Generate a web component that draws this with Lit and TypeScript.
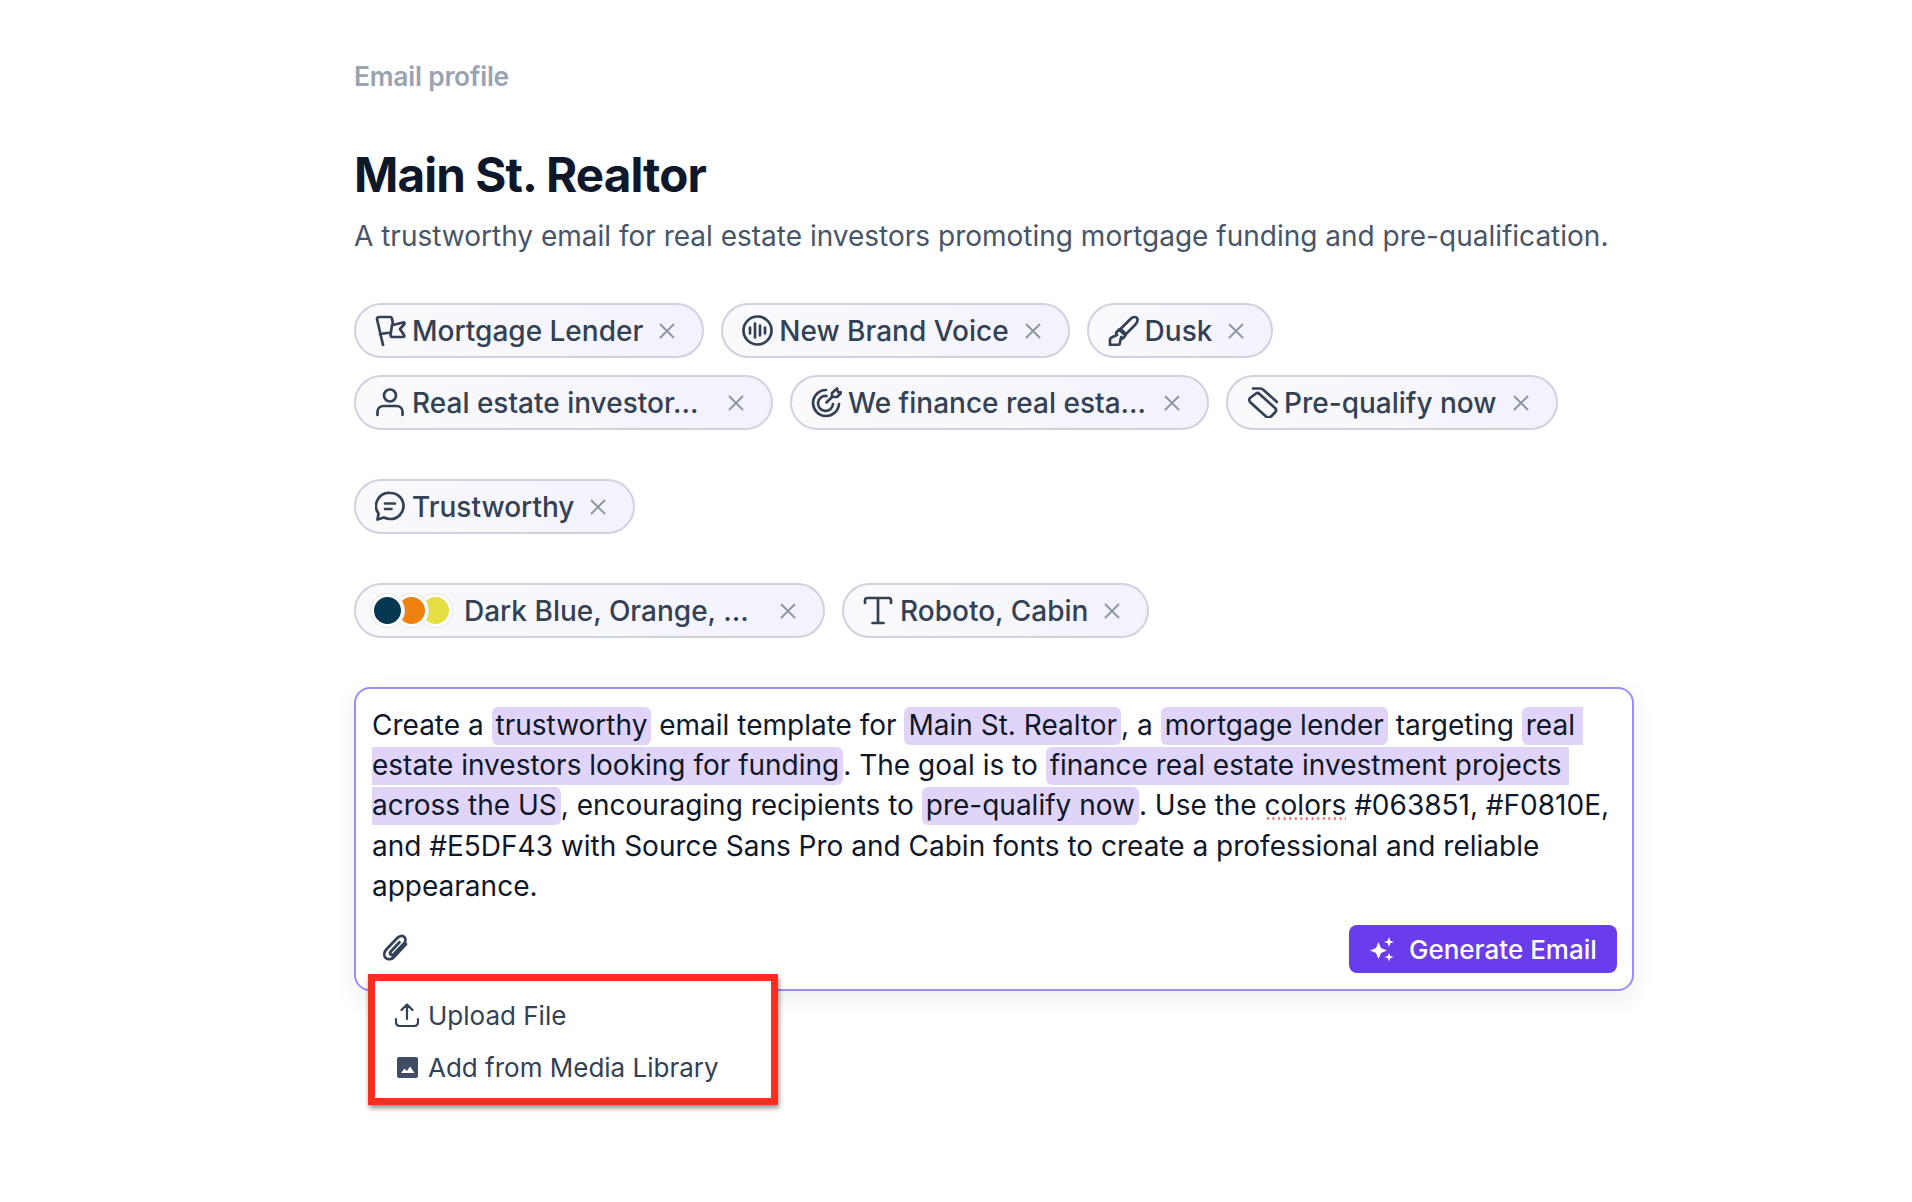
import { LitElement, css, html, svg } from 'lit';
import { customElement } from 'lit/decorators.js';

const ICONS: Record<string, unknown> = {
  flag: svg`<path d="M2 4 L8 30 M2 4 C2 2.5 3 2 4.5 2 H15 C16.5 2 17 3 17.2 4.5 L18 10 L28 7.5 C29.5 7.2 30 8 29 9.5 L25 14 L29 20 C29.8 21.5 29 22 28 22 H18 C16.5 22 15.5 21.5 15.5 20 L17 10 M5 19 L15.7 17.5"/>`,
  voice: svg`<circle cx="15.5" cy="15.5" r="14"/><path d="M8 12.5 v6 M13 8.5 v14 M18 10.5 v10 M23 12.5 v6"/>`,
  brush: svg`<path d="M23 3.5 C25 1.5 28.5 1.5 29.3 3.5 C30.2 5.8 29 8 27 10 L18 19 L12.5 14 Z"/><path d="M11 14.5 L17.5 20.5 L15 23.5 L13.2 22 L11.5 29.5 L2 30 L2 24.5 C2 23.5 3 22.8 4 22.3 L9 20 L8 17.8 Z"/>`,
  target: svg`<path d="M15 3 A13 13 0 1 0 28 17 M15.5 9 A7.5 7.5 0 1 0 22 17 M15.5 15.5 L21 10 M21 10 V6 L26 1.5 L27 5 L30.5 5.5 L26 10 Z"/>`,
  tag: svg`<path d="M3 11 L9 6.5 C10 5.8 11.5 6 12.5 7 L28 21 C29.5 22.5 29.5 24 28 25.5 L24 29.5 C22.5 31 20.5 31 19 29.5 L3.5 15.5 C2 14 2 12 3 11 Z M6 1.5 H13 C14.5 1.5 15.5 2 16.5 3 L30 15"/>`,
  person: svg`<circle cx="15" cy="8.5" r="6"/><path d="M2.5 28 V25 C2.5 21.5 5 19 8.5 19 H21.5 C25 19 27.5 21.5 27.5 25 V28"/>`,
  chat: svg`<path d="M15.5 2 A13 13 0 1 1 15.5 28 C13 28 11 27.5 9 26.5 L2.5 28.5 L3.5 22.5 A13 13 0 0 1 15.5 2 Z M10 12.5 H20 M10 18 H16.5"/>`,
  serif: svg`<path d="M2 8 V5.5 C2 4 3 3 4.5 3 H25.5 C27 3 28 4 28 5.5 V8 M15 3 V28 M9.5 28 H20.5"/>`,
};

const chip = (icon: string, label: string, long = false) => html`
  <span class="chip">
    <svg class="icon" viewBox="0 0 31 31">${ICONS[icon]}</svg>
    <span class="label ${long ? 'long' : ''}">${label}</span>
    <svg class="x" viewBox="0 0 16 16"><path d="M1 1 L15 15 M15 1 L1 15"/></svg>
  </span>
`;

@customElement('app-root')
export class AppRoot extends LitElement {
  static styles = css`
    :host {
      display: block;
      height: 1202px;
      background: #fff;
      color: #0f172a;
      font-family: Inter, 'Liberation Sans', sans-serif;
    }

    main {
      width: 1280px;
      padding: 57px 0 0 354px;
    }

    .eyebrow {
      font-size: 26.4px;
      line-height: 38px;
      font-weight: 600;
      color: #9aa3b2;
      letter-spacing: -0.2px;
    }

    h1 {
      margin: 51px 0 0;
      font-size: 47.6px;
      line-height: 58px;
      font-weight: 700;
      letter-spacing: -0.9px;
      color: #0f172a;
    }

    .sub {
      margin: 12px 0 0;
      font-size: 28px;
      line-height: 40px;
      color: #475569;
    }

    .rows {
      margin-top: 47px;
      display: flex;
      flex-direction: column;
      gap: 17px;
    }

    .group {
      margin-top: 49px;
    }

    .row {
      display: flex;
      gap: 17px;
    }

    .chip {
      box-sizing: border-box;
      height: 55px;
      display: inline-flex;
      align-items: center;
      padding: 0 27px 0 19px;
      border: 2px solid #cfd3df;
      border-radius: 28px;
      background: linear-gradient(100deg, #fafafc, #f3f2fd);
      font-size: 28px;
      font-weight: 500;
      color: #334155;
    }

    .chip.swatches {
      padding-left: 15px;
    }

    .icon {
      width: 31px;
      height: 31px;
      margin-right: 6px;
      flex: none;
      fill: none;
      stroke: #334155;
      stroke-width: 2.7;
      stroke-linecap: round;
      stroke-linejoin: round;
    }

    .label {
      white-space: nowrap;
    }

    .long {
      width: 300px;
    }

    .x {
      width: 16px;
      height: 16px;
      margin-left: 16px;
      flex: none;
      fill: none;
      stroke: #8f96a3;
      stroke-width: 2;
    }

    .dots {
      display: flex;
      margin-right: 12px;
    }

    .dot {
      position: relative;
      box-sizing: border-box;
      width: 33px;
      height: 33px;
      margin-right: -9px;
      border-radius: 50%;
      border: 3px solid #fff;
      box-shadow: 0 0 0 1px #e5e7eb;
    }

    .dot:nth-child(1) {
      z-index: 3;
      background: #063851;
    }

    .dot:nth-child(2) {
      z-index: 2;
      background: #f0810e;
    }

    .dot:nth-child(3) {
      z-index: 1;
      background: #e5df43;
      margin-right: 0;
    }

    .card {
      position: relative;
      box-sizing: border-box;
      margin-top: 49px;
      height: 304px;
      padding: 16px 15px 15px 16px;
      border: 2px solid #a18bf6;
      border-radius: 16px;
      box-shadow: 0 8px 24px rgba(15, 23, 42, 0.08);
      background: #fff;
    }

    .prompt {
      margin: 0;
      font-size: 28px;
      line-height: 40.2px;
      color: #0f172a;
      white-space: pre-wrap;
    }

    mark {
      background: #e0d4f8;
      color: inherit;
      padding: 1px 4px 3px;
      border-radius: 6px;
    }

    .typo {
      background-image: radial-gradient(circle, #f87171 1.2px, transparent 1.4px);
      background-size: 5.6px 3px;
      background-repeat: repeat-x;
      background-position: 0 calc(100% - 2px);
    }

    .bar {
      position: absolute;
      left: 15px;
      right: 15px;
      bottom: 16px;
      display: flex;
      align-items: center;
      justify-content: space-between;
    }

    .clip {
      width: 28px;
      height: 28px;
      margin: 0 0 2px 11px;
      fill: none;
      stroke: #334155;
      stroke-width: 2.8;
      stroke-linecap: round;
      stroke-linejoin: round;
    }

    button {
      height: 48px;
      width: 268px;
      display: flex;
      align-items: center;
      gap: 14px;
      padding: 0 0 0 20px;
      border: 0;
      border-radius: 8px;
      background: #6a3dec;
      color: #fff;
      font: 500 26px Inter, 'Liberation Sans', sans-serif;
    }

    button svg {
      width: 26px;
      height: 26px;
      fill: #fff;
    }

    .menu {
      position: absolute;
      left: 12px;
      top: 285px;
      box-sizing: border-box;
      width: 410px;
      height: 131px;
      padding: 14px 0 0 19px;
      border: 7px solid #ff2d20;
      background: #fff;
      box-shadow: 1px 3px 5px rgba(0, 0, 0, 0.45);
      display: flex;
      flex-direction: column;
      gap: 12px;
    }

    .item {
      display: flex;
      align-items: center;
      gap: 8px;
      height: 40px;
      font-size: 26px;
      color: #334155;
    }

    .item svg {
      width: 26px;
      height: 26px;
      flex: none;
    }
  `;

  render() {
    return html`
      <main>
        <div class="eyebrow">Email profile</div>
        <h1>Main St. Realtor</h1>
        <p class="sub">A trustworthy email for real estate investors promoting mortgage funding and pre-qualification.</p>

        <div class="rows">
          <div class="row">
            ${chip('flag', 'Mortgage Lender')}
            ${chip('voice', 'New Brand Voice')}
            ${chip('brush', 'Dusk')}
          </div>
          <div class="row">
            ${chip('person', 'Real estate investor...', true)}
            ${chip('target', 'We finance real esta...', true)}
            ${chip('tag', 'Pre-qualify now')}
          </div>
        </div>

        <div class="row group">${chip('chat', 'Trustworthy')}</div>

        <div class="row group">
          <span class="chip swatches">
            <span class="dots"><i class="dot"></i><i class="dot"></i><i class="dot"></i></span>
            <span class="label long">Dark Blue, Orange, ...</span>
            <svg class="x" viewBox="0 0 16 16"><path d="M1 1 L15 15 M15 1 L1 15"/></svg>
          </span>
          ${chip('serif', 'Roboto, Cabin')}
        </div>

        <div class="card">
          <p class="prompt">Create a <mark>trustworthy</mark> email template for <mark>Main St. Realtor</mark>, a <mark>mortgage lender</mark> targeting <mark>real estate investors looking for funding</mark>. The goal is to <mark>finance real estate investment projects across the US</mark>, encouraging recipients to <mark>pre-qualify now</mark>. Use the <span class="typo">colors</span> #063851, #F0810E, and #E5DF43 with Source Sans Pro and Cabin fonts to create a professional and reliable appearance.</p>

          <div class="bar">
            <svg class="clip" viewBox="0 0 28 28">
              <path d="M24 10 L12.5 22.5 C10 25.5 6 26 3.8 24 C1.5 21.8 2 18 4.5 15.2 L15.5 3.8 C17.5 1.7 20.5 1.5 22.3 3 C24 4.7 23.8 7.5 22 9.5 L12 20 C11 21 9.5 21.2 8.6 20.4 C7.8 19.5 8 18.2 9 17.2 L17.5 8.2"/>
            </svg>
            <button>
              <svg viewBox="0 0 26 26">
                <path d="M9.5 6 L12 12 L18 14.5 L12 17 L9.5 23 L7 17 L1 14.5 L7 12 Z"/>
                <path d="M20 1 L21.3 4.7 L25 6 L21.3 7.3 L20 11 L18.7 7.3 L15 6 L18.7 4.7 Z"/>
                <path d="M20 17 L21.2 20 L24.5 21 L21.2 22.2 L20 25.5 L18.8 22.2 L15.5 21 L18.8 20 Z"/>
              </svg>
              Generate Email
            </button>
          </div>

          <div class="menu">
            <div class="item">
              <svg viewBox="0 0 26 26" fill="none" stroke="#334155" stroke-width="2.2" stroke-linecap="round" stroke-linejoin="round">
                <path d="M13 17 V3 M7.5 8 L13 2.5 L18.5 8 M2 17 V20 C2 22.5 3.5 24 6 24 H20 C22.5 24 24 22.5 24 20 V17"/>
              </svg>
              Upload File
            </div>
            <div class="item">
              <svg viewBox="0 0 26 26">
                <rect x="3" y="3" width="21" height="21" rx="2" fill="#3f4d63"/>
                <path d="M7 19 L10.5 14.5 L13 17 L16 12.5 L20.5 19 Z" fill="#fff"/>
              </svg>
              Add from Media Library
            </div>
          </div>
        </div>
      </main>
    `;
  }
}
